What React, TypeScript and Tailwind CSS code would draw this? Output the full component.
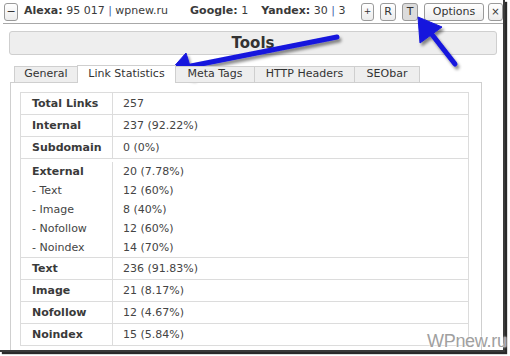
import React from "react";

const font = { fontFamily: '"DejaVu Sans", Verdana, sans-serif' };

function Btn({ children, w, active }: { children: React.ReactNode; w: string; active?: boolean }) {
  return (
    <div
      className={`${w} h-[18px] flex items-center justify-center rounded-[3px] border border-[#9a9a9a] text-[11px] text-[#333] leading-none ${
        active ? "bg-[#dcdcdc]" : "bg-gradient-to-b from-white to-[#ececec]"
      }`}
    >
      {children}
    </div>
  );
}

const rows: { label: string; value: string; bold: boolean }[][] = [
  [{ label: "Total Links", value: "257", bold: true }],
  [{ label: "Internal", value: "237 (92.22%)", bold: true }],
  [{ label: "Subdomain", value: "0 (0%)", bold: true }],
  [
    { label: "External", value: "20 (7.78%)", bold: true },
    { label: "- Text", value: "12 (60%)", bold: false },
    { label: "- Image", value: "8 (40%)", bold: false },
    { label: "- Nofollow", value: "12 (60%)", bold: false },
    { label: "- Noindex", value: "14 (70%)", bold: false },
  ],
  [{ label: "Text", value: "236 (91.83%)", bold: true }],
  [{ label: "Image", value: "21 (8.17%)", bold: true }],
  [{ label: "Nofollow", value: "12 (4.67%)", bold: true }],
  [{ label: "Noindex", value: "15 (5.84%)", bold: true }],
];

const tabs = [
  { name: "General", w: "w-[64px]" },
  { name: "Link Statistics", w: "w-[99px]", active: true },
  { name: "Meta Tags", w: "w-[80px]" },
  { name: "HTTP Headers", w: "w-[101px]" },
  { name: "SEObar", w: "w-[66px]" },
];

export default function App() {
  return (
    <div className="relative w-[510px] h-[356px] bg-white overflow-hidden" style={font}>
      <div className="w-[505px] h-[352px] bg-white shadow-[2px_2px_1px_#2a2a2a] border-r-2 border-b-2 border-[#3a3a3a] flex flex-col">
        {/* toolbar */}
        <div className="h-[24px] ml-[3px] flex items-center border-b border-[#a8a8a8] text-[11px] text-[#3a3a3a]">
          <div className="ml-[1px]">
            <Btn w="w-[14px]">−</Btn>
          </div>
          <div className="ml-[6px] flex items-center whitespace-nowrap">
            <span>
              <b>Alexa:</b> 95 017 <span className="text-[#4466aa]">|</span> wpnew.ru
            </span>
            <span className="ml-[22px]">
              <b>Google:</b> 1
            </span>
            <span className="ml-[13px]">
              <b>Yandex:</b> 30 <span className="text-[#4466aa]">|</span> 3
            </span>
          </div>
          <div className="ml-auto mr-[0px] flex items-center gap-[6px]">
            <Btn w="w-[13px]">
              <span className="text-[9px]">+</span>
            </Btn>
            <Btn w="w-[16px]">R</Btn>
            <Btn w="w-[16px]" active>
              T
            </Btn>
            <Btn w="w-[60px]">Options</Btn>
            <div className="-ml-[2px]">
              <Btn w="w-[15px]">
                <span className="text-[10px]">×</span>
              </Btn>
            </div>
          </div>
        </div>

        {/* Tools header */}
        <div className="mt-[7px] ml-[9px] w-[488px] h-[24px] rounded-[3px] border border-[#cfcfcf] bg-[#eeeeee] flex items-center justify-center text-[15px] font-bold text-[#333]">
          Tools
        </div>

        {/* tabs */}
        <div className="mt-[10px] ml-[14px] flex items-end h-[18px] relative z-10">
          {tabs.map((t) => (
            <div
              key={t.name}
              className={`${t.w} flex items-center justify-center text-[11px] text-[#333] border-t border-l border-r border-[#cfcfcf] -mr-px ${
                t.active ? "h-[18px] bg-white" : "h-[17px] bg-[#eeeeee] border-b"
              }`}
            >
              {t.name}
            </div>
          ))}
        </div>

        {/* panel */}
        <div className="-mt-px ml-[10px] w-[472px] flex-1 border-t border-l border-r border-[#cfcfcf] pt-[9px] pl-[9px]">
          <div className="w-[449px] border border-[#dcdcdc] text-[11px] text-[#444]">
            {rows.map((group, i) => (
              <div
                key={i}
                className={`flex ${i > 0 ? "border-t border-[#dcdcdc]" : ""} ${
                  group.length > 1 ? "pt-[3px]" : ""
                }`}
              >
                <div className="w-[92px] pl-[11px] border-r border-[#dcdcdc]">
                  {group.map((r) => (
                    <div
                      key={r.label}
                      className={`${group.length > 1 ? "leading-[19px] h-[19px]" : "leading-[21px] h-[21px]"} ${
                        r.bold ? "font-bold text-[#3a3a3a]" : ""
                      } whitespace-nowrap`}
                    >
                      {r.label}
                    </div>
                  ))}
                </div>
                <div className="flex-1 pl-[10px]">
                  {group.map((r) => (
                    <div
                      key={r.label}
                      className={`${group.length > 1 ? "leading-[19px] h-[19px]" : "leading-[21px] h-[21px]"} whitespace-nowrap`}
                    >
                      {r.value}
                    </div>
                  ))}
                </div>
              </div>
            ))}
          </div>
        </div>
      </div>

      {/* watermark */}
      <div
        className="absolute left-[427px] top-[332px] text-[18px] text-[#a0a0a0] leading-none tracking-[-0.3px]"
        style={{ fontFamily: '"Liberation Sans", Arial, sans-serif', textShadow: "0 0 2px #fff, 0 0 2px #fff" }}
      >
        WPnew.ru
      </div>

      {/* arrows */}
      <svg className="absolute left-0 top-0 pointer-events-none" width="510" height="356">
        <defs>
          <filter id="sh" x="-20%" y="-20%" width="140%" height="140%">
            <feDropShadow dx="2" dy="3" stdDeviation="1.6" floodColor="#000" floodOpacity="0.45" />
          </filter>
        </defs>
        <g filter="url(#sh)" fill="#1515dd" stroke="#1515dd">
          <line x1="337" y1="37" x2="191" y2="66" strokeWidth="5" strokeLinecap="round" />
          <polygon points="170,71 186,53 194,79" strokeWidth="1" strokeLinejoin="round" />
          <line x1="455" y1="64" x2="430" y2="32" strokeWidth="5" strokeLinecap="round" />
          <polygon points="418,17 442,27 420,43" strokeWidth="1" strokeLinejoin="round" />
        </g>
      </svg>
    </div>
  );
}
